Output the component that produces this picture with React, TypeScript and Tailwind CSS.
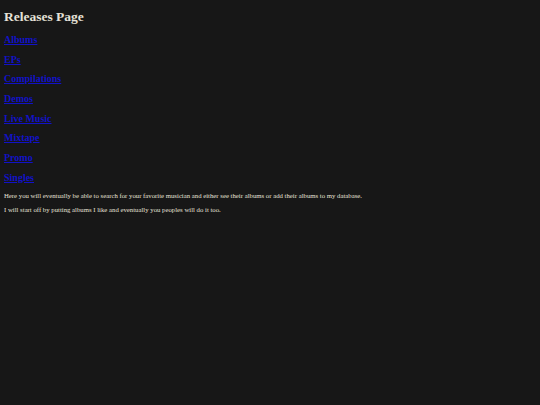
const links = ["Albums", "EPs", "Compilations", "Demos", "Live Music", "Mixtape", "Promo", "Singles"];

export default function App() {
  return (
    <div className="min-h-[405px] w-full bg-[#171717] px-[4px] pt-[8px] text-[#e6e2d8] font-['Liberation_Serif',serif]">
      <h1 className="text-[13.5px] font-bold leading-[17px]">Releases Page</h1>
      <div className="mt-[9px] flex flex-col">
        {links.map((l) => (
          <h3 key={l} className="text-[10px] font-bold leading-[12px] mb-[7.7px]">
            <a href="#" className="text-[#1212c8] underline">
              {l}
            </a>
          </h3>
        ))}
      </div>
      <p className="text-[6.75px] leading-[8px]">
        Here you will eventually be able to search for your favorite musician and either see their albums or add their albums to my database.
      </p>
      <p className="mt-[6px] text-[6.75px] leading-[8px]">
        I will start off by putting albums I like and eventually you peoples will do it too.
      </p>
    </div>
  );
}
